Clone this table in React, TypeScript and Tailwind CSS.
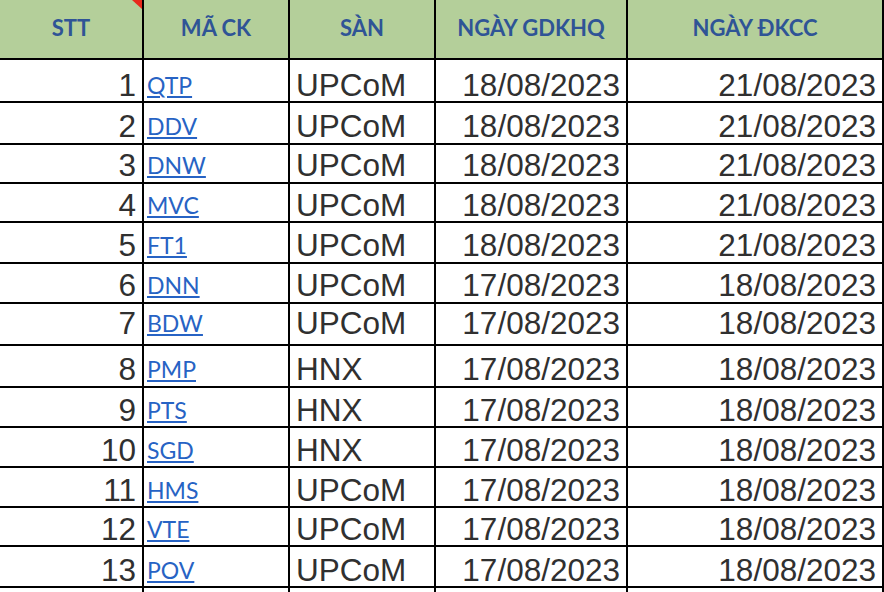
import React from "react";

type Row = { stt: string; ma: string; san: string; gd: string; dk: string; h: string; pb: string; lpb: string };

const rows: Row[] = [
  { stt: "1", ma: "QTP", san: "UPCoM", gd: "18/08/2023", dk: "21/08/2023", h: "h-[43px]", pb: "pb-0", lpb: "pb-[4px]" },
  { stt: "2", ma: "DDV", san: "UPCoM", gd: "18/08/2023", dk: "21/08/2023", h: "h-[42px]", pb: "pb-[1px]", lpb: "pb-[5px]" },
  { stt: "3", ma: "DNW", san: "UPCoM", gd: "18/08/2023", dk: "21/08/2023", h: "h-[39px]", pb: "pb-[1px]", lpb: "pb-[5px]" },
  { stt: "4", ma: "MVC", san: "UPCoM", gd: "18/08/2023", dk: "21/08/2023", h: "h-[39px]", pb: "pb-0", lpb: "pb-[4px]" },
  { stt: "5", ma: "FT1", san: "UPCoM", gd: "18/08/2023", dk: "21/08/2023", h: "h-[41px]", pb: "pb-[1px]", lpb: "pb-[5px]" },
  { stt: "6", ma: "DNN", san: "UPCoM", gd: "17/08/2023", dk: "18/08/2023", h: "h-[40px]", pb: "pb-[1px]", lpb: "pb-[5px]" },
  { stt: "7", ma: "BDW", san: "UPCoM", gd: "17/08/2023", dk: "18/08/2023", h: "h-[42px]", pb: "pb-[5px]", lpb: "pb-[9px]" },
  { stt: "8", ma: "PMP", san: "HNX", gd: "17/08/2023", dk: "18/08/2023", h: "h-[42px]", pb: "pb-[1px]", lpb: "pb-[5px]" },
  { stt: "9", ma: "PTS", san: "HNX", gd: "17/08/2023", dk: "18/08/2023", h: "h-[40px]", pb: "pb-0", lpb: "pb-[4px]" },
  { stt: "10", ma: "SGD", san: "HNX", gd: "17/08/2023", dk: "18/08/2023", h: "h-[40px]", pb: "pb-0", lpb: "pb-[4px]" },
  { stt: "11", ma: "HMS", san: "UPCoM", gd: "17/08/2023", dk: "18/08/2023", h: "h-[40px]", pb: "pb-0", lpb: "pb-[4px]" },
  { stt: "12", ma: "VTE", san: "UPCoM", gd: "17/08/2023", dk: "18/08/2023", h: "h-[39px]", pb: "pb-0", lpb: "pb-[4px]" },
  { stt: "13", ma: "POV", san: "UPCoM", gd: "17/08/2023", dk: "18/08/2023", h: "h-[41px]", pb: "pb-0", lpb: "pb-[4px]" },
];

const num = "font-['Liberation_Sans',Arial,sans-serif] text-[31.5px] leading-[31px] text-[#303030]";
const hdr = "font-['Lato',sans-serif] font-bold text-[22px] leading-[22px] text-[#2f5496]";

export default function App() {
  return (
    <div className="w-[884px] h-[592px] overflow-hidden bg-white">
      <div className="flex h-[60px] border-b-2 border-black bg-[#b4cf9a]">
        <div className="relative w-[144px] border-r-2 border-black flex items-center justify-center pb-[3px]">
          <span className={hdr}>STT</span>
          <div className="absolute top-0 right-0 w-0 h-0 border-t-[9px] border-t-[#e8291c] border-l-[10px] border-l-transparent" />
        </div>
        <div className="w-[146px] border-r-2 border-black flex items-center justify-center pb-[3px]">
          <span className={hdr}>MÃ CK</span>
        </div>
        <div className="w-[146px] border-r-2 border-black flex items-center justify-center pb-[3px]">
          <span className={hdr}>SÀN</span>
        </div>
        <div className="w-[192px] border-r-2 border-black flex items-center justify-center pb-[3px]">
          <span className={hdr}>NGÀY GDKHQ</span>
        </div>
        <div className="w-[256px] border-r-2 border-black flex items-center justify-center pb-[3px]">
          <span className={hdr}>NGÀY ĐKCC</span>
        </div>
      </div>
      {rows.map((r) => (
        <div key={r.stt} className={`flex border-b-2 border-black ${r.h}`}>
          <div className={`w-[144px] border-r-2 border-black flex items-end justify-end pr-[6px] ${r.pb}`}>
            <span className={num}>{r.stt}</span>
          </div>
          <div className={`w-[146px] border-r-2 border-black flex items-end pl-[3px] ${r.lpb}`}>
            <a
              href="#"
              className="font-['Lato',sans-serif] text-[23px] leading-[23px] text-[#2763c4] underline decoration-2 underline-offset-[2px]"
            >
              {r.ma}
            </a>
          </div>
          <div className={`w-[146px] border-r-2 border-black flex items-end pl-[6px] ${r.pb}`}>
            <span className={num}>{r.san}</span>
          </div>
          <div className={`w-[192px] border-r-2 border-black flex items-end justify-end pr-[6px] ${r.pb}`}>
            <span className={num}>{r.gd}</span>
          </div>
          <div className={`w-[256px] border-r-2 border-black flex items-end justify-end pr-[6px] ${r.pb}`}>
            <span className={num}>{r.dk}</span>
          </div>
        </div>
      ))}
      <div className="flex h-[40px]">
        <div className="w-[144px] border-r-2 border-black" />
        <div className="w-[146px] border-r-2 border-black" />
        <div className="w-[146px] border-r-2 border-black" />
        <div className="w-[192px] border-r-2 border-black" />
        <div className="w-[256px] border-r-2 border-black" />
      </div>
    </div>
  );
}
